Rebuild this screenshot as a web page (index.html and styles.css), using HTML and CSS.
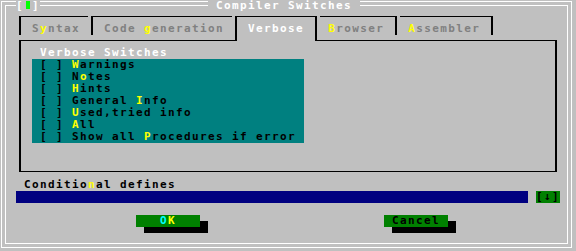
FILE: index.html
```html
<!DOCTYPE html>
<html lang="en">
<head>
    <meta charset="UTF-8">
    <title>Compiler Switches</title>
    <link rel="stylesheet" href="styles.css">
</head>
<body>

<div class="dialog">
    <div class="titlebar">
        <div class="close">[<span class="close-mark"></span>]</div>
        <div class="title">Compiler Switches</div>
    </div>

    <div class="tabs">
        <div class="tab tab-before">S<span class="hot">y</span>ntax</div>
        <div class="tab tab-before">Code <span class="hot">g</span>eneration</div>
        <div class="tab tab-active">Verbose</div>
        <div class="tab tab-after"><span class="hot">B</span>rowser</div>
        <div class="tab tab-after"><span class="hot">A</span>ssembler</div>
    </div>

    <div class="group">
        <div class="group-label">Verbose Switches</div>
        <div class="checks">
            <div class="check">[ ] <span class="hot">W</span>arnings</div>
            <div class="check">[ ] N<span class="hot">o</span>tes</div>
            <div class="check">[ ] <span class="hot">H</span>ints</div>
            <div class="check">[ ] General <span class="hot">I</span>nfo</div>
            <div class="check">[ ] <span class="hot">U</span>sed,tried info</div>
            <div class="check">[ ] <span class="hot">A</span>ll</div>
            <div class="check">[ ] Show all <span class="hot">P</span>rocedures if error</div>
        </div>
    </div>

    <div class="field-label">Conditio<span class="hot">n</span>al defines</div>
    <div class="input-row">
        <div class="input"></div>
        <div class="history">[↓]</div>
    </div>

    <div class="buttons">
        <div class="button button-ok"><span class="ok-o">O</span><span class="hot">K</span></div>
        <div class="button button-cancel">Cancel</div>
    </div>
</div>

</body>
</html>
```

FILE: styles.css
```css
body {
    margin: 0;
    background-color: #c0c0c0;
    font-family: 'DejaVu Sans Mono', 'Liberation Mono', monospace;
    font-size: 11px;
    font-weight: bold;
    letter-spacing: 1.38px;
    line-height: 12px;
    color: #000;
}
.dialog {
    position: relative;
    z-index: 0;
    width: 576px;
    height: 251px;
    overflow: hidden;
    background-color: #c0c0c0;
}
/* double frame */
.dialog::before,
.dialog::after {
    content: "";
    position: absolute;
    z-index: -1;
    box-sizing: border-box;
    border: 1px solid #fff;
}
.dialog::before {
    left: 1px;
    top: 1px;
    width: 571px;
    height: 247px;
}
.dialog::after {
    left: 5px;
    top: 5px;
    width: 563px;
    height: 239px;
}
.hot {
    color: #ffff00;
}
.titlebar {
    display: flex;
    height: 11px;
    line-height: 11px;
    color: #fff;
}
.close {
    display: flex;
    margin-left: 16px;
    background-color: #c0c0c0;
}
.close-mark {
    width: 4px;
    height: 8px;
    margin: 1px 2px 0;
    background-color: #00ff00;
}
.title {
    margin-left: 168px;
    padding: 0 8px;
    background-color: #c0c0c0;
}
/* tabs */
.tabs {
    display: flex;
    align-items: flex-start;
    height: 24px;
    padding-left: 19px;
}
.tab {
    margin-top: 5px;
    padding-top: 6px;
    border-top: 1px solid #000;
    color: #808080;
}
.tab + .tab {
    margin-left: 3px;
}
.tab-before {
    border-left: 2px solid #000;
    padding-left: 11px;
    padding-right: 8px;
}
.tab-after {
    border-right: 2px solid #000;
    padding-left: 8px;
    padding-right: 11px;
}
.tab-active {
    position: relative;
    z-index: 1;
    border-left: 2px solid #000;
    border-right: 2px solid #000;
    padding: 6px 11px;
    background-color: #c0c0c0;
    color: #fff;
}
/* verbose group */
.group {
    box-sizing: border-box;
    width: 538px;
    height: 132px;
    margin: 5px 0 0 19px;
    padding: 6px 0 0 11px;
    border: 1px solid #000;
    border-left-width: 2px;
    border-right-width: 2px;
}
.group-label {
    padding-left: 8px;
    color: #fff;
}
.checks {
    width: 272px;
    background-color: #008080;
}
.check {
    height: 12px;
    padding-left: 8px;
    white-space: pre;
}
/* conditional defines */
.field-label {
    margin: 7px 0 0 24px;
}
.input-row {
    display: flex;
    height: 12px;
    margin-left: 16px;
}
.input {
    width: 512px;
    background-color: #000080;
}
.history {
    width: 24px;
    margin-left: 8px;
    background-color: #008000;
    white-space: pre;
}
/* buttons */
.buttons {
    display: flex;
    margin-top: 12px;
}
.button {
    width: 64px;
    height: 12px;
    background-color: #008000;
    box-shadow: 8px 6px 0 #000;
    text-align: center;
}
.button-ok {
    margin-left: 136px;
}
.ok-o {
    color: #00ffff;
}
.button-cancel {
    margin-left: 184px;
}
```
